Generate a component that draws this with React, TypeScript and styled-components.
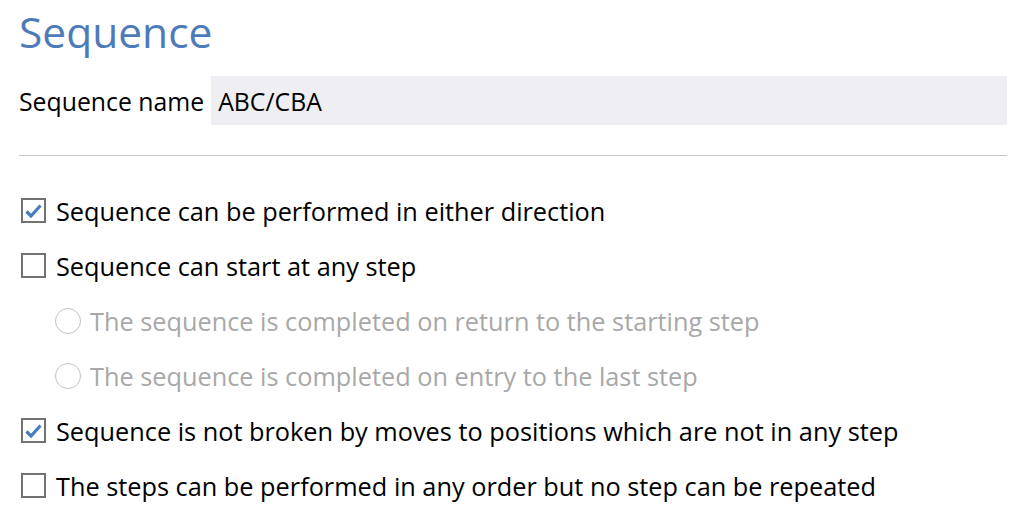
import { createGlobalStyle, styled } from "styled-components";

const GlobalStyle = createGlobalStyle`
  html, body {
    margin: 0;
    padding: 0;
    background: #ffffff;
  }
  body {
    font-family: "Open Sans", "Noto Sans", sans-serif;
  }
`;

const Page = styled.div`
  width: 1014px;
  height: 518px;
  overflow: hidden;
  padding: 0 7px 0 19px;
  box-sizing: border-box;
  color: #000;
`;

const Title = styled.h1`
  margin: 0;
  padding-top: 4px;
  height: 60px;
  font-size: 42.5px;
  font-weight: 400;
  line-height: 56px;
  color: #4d7bba;
`;

const NameRow = styled.div`
  display: flex;
  align-items: center;
  gap: 7px;
  margin-top: 12px;
`;

const Label = styled.span`
  font-size: 24.8px;
`;

const NameInput = styled.div`
  flex: 1;
  height: 49px;
  background: #efeff3;
  display: flex;
  align-items: center;
  padding-left: 7px;
  font-size: 24.8px;
`;

const Divider = styled.hr`
  border: none;
  border-top: 1px solid #c6c6c6;
  margin: 30px 0 27px;
`;

const Options = styled.div`
  display: flex;
  flex-direction: column;
`;

const Row = styled.div<{ $indent?: boolean; $disabled?: boolean }>`
  height: 55px;
  display: flex;
  align-items: center;
  gap: 10px;
  padding-left: ${(p) => (p.$indent ? "36px" : "2px")};
  font-size: 25.3px;
  color: ${(p) => (p.$disabled ? "#a8a8a8" : "#000")};
`;

const Box = styled.span`
  width: 25px;
  height: 25px;
  box-sizing: border-box;
  border: 2px solid #727272;
  background: #fff;
  display: flex;
  align-items: center;
  justify-content: center;
  flex-shrink: 0;
`;

const Radio = styled.span`
  width: 26px;
  height: 26px;
  box-sizing: border-box;
  border: 1px solid #c2c2c2;
  border-radius: 50%;
  flex-shrink: 0;
  margin-right: -1px;
`;

function Check({ checked }: { checked: boolean }) {
  return (
    <Box>
      {checked ? (
        <svg width="17" height="14" viewBox="0 0 17 14">
          <path
            d="M1.5 7.5 L6 12 L15.5 1.5"
            fill="none"
            stroke="#4a7bbf"
            strokeWidth="3.2"
            strokeLinejoin="miter"
          />
        </svg>
      ) : null}
    </Box>
  );
}

function App() {
  return (
    <Page>
      <GlobalStyle />
      <Title>Sequence</Title>
      <NameRow>
        <Label>Sequence name</Label>
        <NameInput>ABC/CBA</NameInput>
      </NameRow>
      <Divider />
      <Options>
        <Row>
          <Check checked />
          Sequence can be performed in either direction
        </Row>
        <Row>
          <Check checked={false} />
          Sequence can start at any step
        </Row>
        <Row $indent $disabled>
          <Radio />
          The sequence is completed on return to the starting step
        </Row>
        <Row $indent $disabled>
          <Radio />
          The sequence is completed on entry to the last step
        </Row>
        <Row>
          <Check checked />
          Sequence is not broken by moves to positions which are not in any step
        </Row>
        <Row>
          <Check checked={false} />
          The steps can be performed in any order but no step can be repeated
        </Row>
      </Options>
    </Page>
  );
}

export default App;
